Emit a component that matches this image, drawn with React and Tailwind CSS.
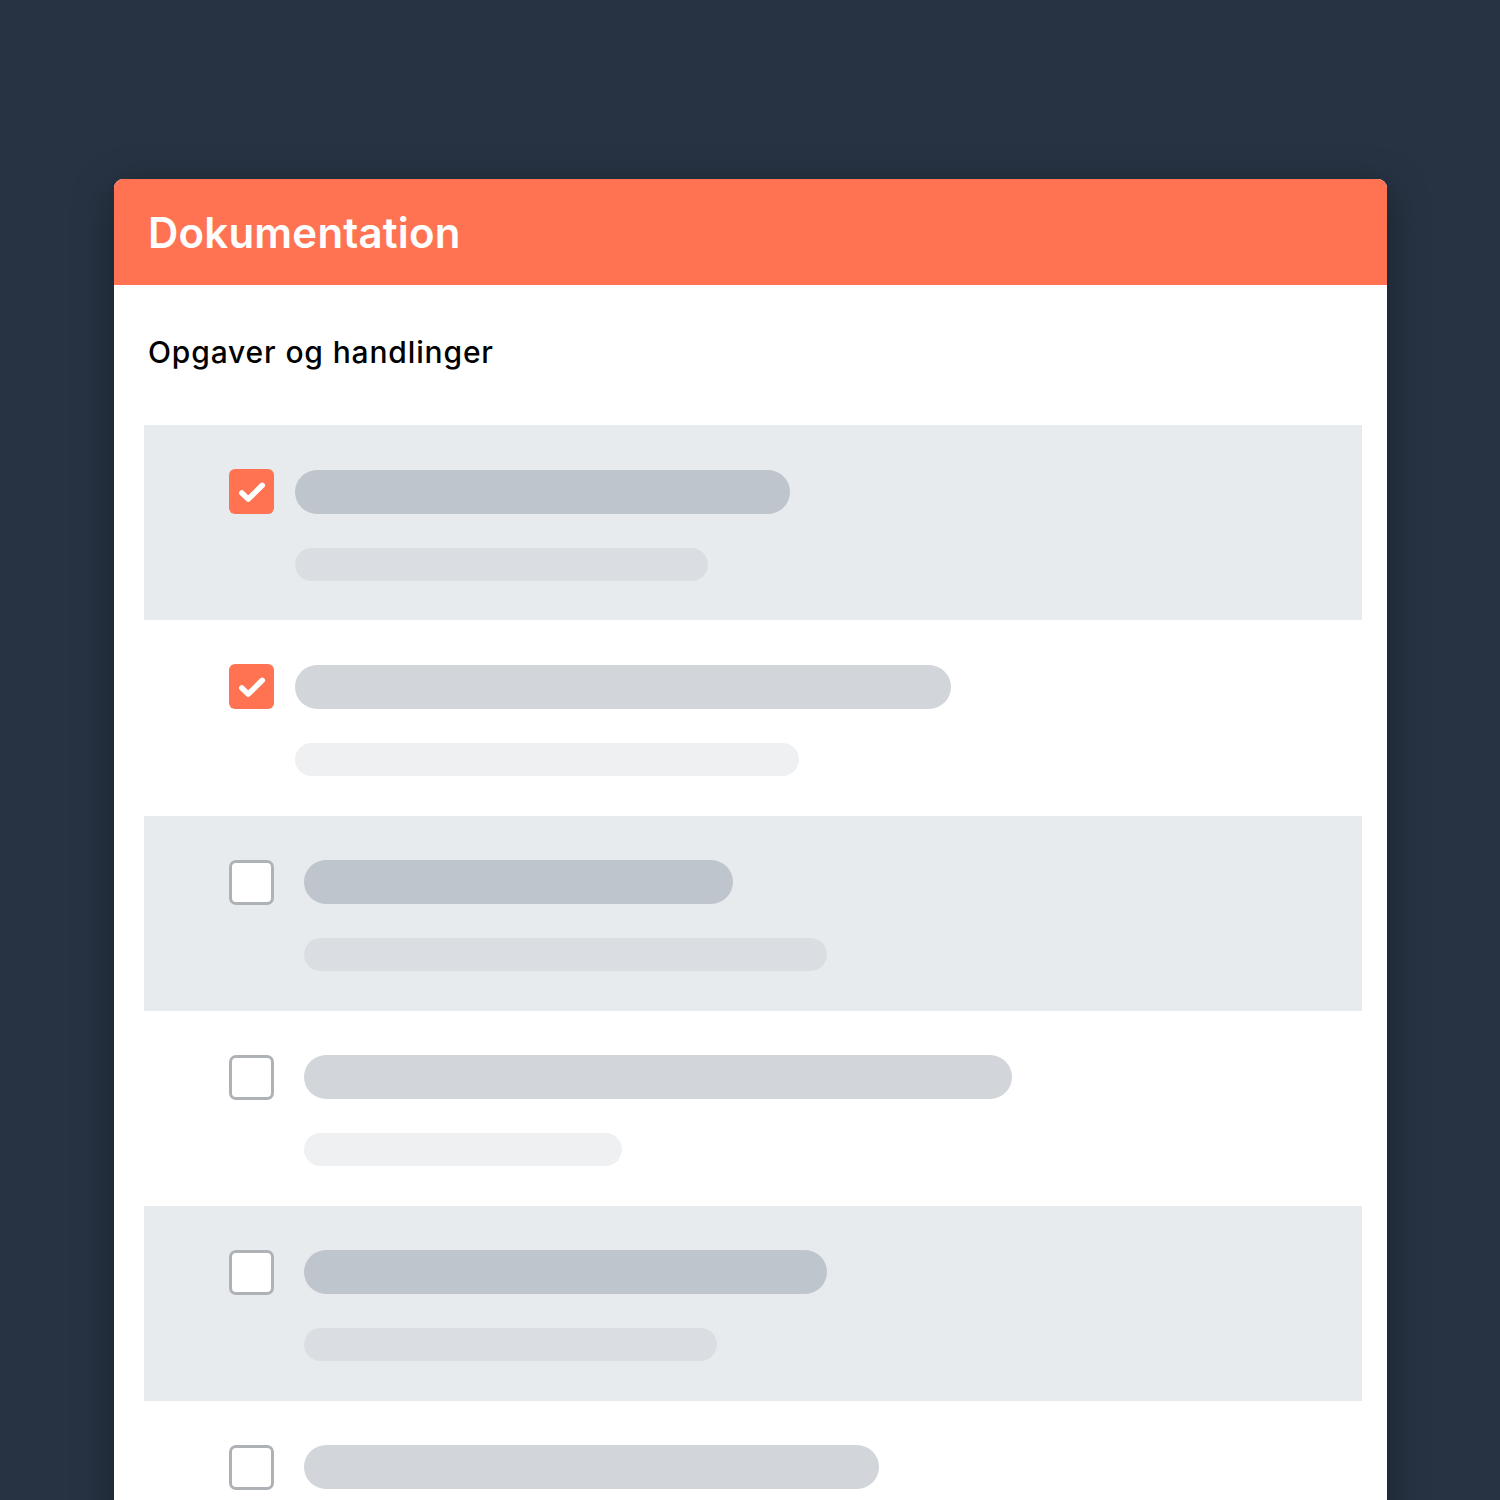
import React from 'react';

// Skeleton rows: widths of the title bar and the note bar, and whether the task is done
const TASKS = [
  { done: true, title: 'w-[495px]', note: 'w-[413px]' },
  { done: true, title: 'w-[656px]', note: 'w-[504px]' },
  { done: false, title: 'w-[429px]', note: 'w-[523px]' },
  { done: false, title: 'w-[708px]', note: 'w-[318px]' },
  { done: false, title: 'w-[523px]', note: 'w-[413px]' },
  { done: false, title: 'w-[575px]', note: 'w-[400px]' },
];

function Checkbox({ checked }) {
  if (checked) {
    return (
      <div className="w-[45px] h-[45px] shrink-0 rounded-[6px] bg-[#ff7352] flex items-center justify-center">
        <svg viewBox="0 0 24 24" className="w-[38px] h-[38px]" fill="none">
          <path d="M5.6 12.6l4 3.9L18.5 7.8" stroke="white" strokeWidth="3.5" strokeLinecap="round" strokeLinejoin="round" />
        </svg>
      </div>
    );
  }
  return <div className="w-[45px] h-[45px] shrink-0 rounded-[7px] border-[3px] border-[#aeb1b5] bg-white" />;
}

function TaskRow({ task, shaded }) {
  const titleColor = shaded ? 'bg-[#bec5cd]' : 'bg-[#d2d6db]';
  const noteColor = shaded ? 'bg-[#dadee3]' : 'bg-[#eef0f2]';
  return (
    <div className={`h-[195.3px] pl-[85px] pt-[44px] flex ${task.done ? 'gap-[20.5px]' : 'gap-[30px]'} ${shaded ? 'bg-[#e8ebee]' : 'bg-white'}`}>
      <Checkbox checked={task.done} />
      <div className={`flex flex-col gap-[34px] ${task.done ? 'pt-[1px]' : ''}`}>
        <div className={`h-[44px] rounded-full ${titleColor} ${task.title}`} />
        <div className={`h-[33px] rounded-full ${noteColor} ${task.note}`} />
      </div>
    </div>
  );
}

export default function App() {
  return (
    <div className="w-[1500px] h-[1500px] overflow-hidden bg-[#273343] pt-[179px] pl-[114px] font-['Inter',sans-serif]">
      <div className="w-[1273px] rounded-t-[9px] overflow-hidden bg-white shadow-[0_10px_40px_rgba(0,0,0,0.35)]">
        <div className="h-[106px] bg-[#ff7352] pl-[34px] pt-[2px] flex items-center">
          <h1 className="text-[42px] font-semibold text-white tracking-[0.2px] leading-none">Dokumentation</h1>
        </div>
        <div className="pl-[30px] pr-[25px] pb-[200px]">
          <h2 className="pl-[4px] pt-[51px] pb-[56px] text-[30px] font-medium text-black leading-[33px] tracking-[0.85px]">
            Opgaver og handlinger
          </h2>
          {TASKS.map((task, i) => (
            <TaskRow key={i} task={task} shaded={i % 2 === 0} />
          ))}
        </div>
      </div>
    </div>
  );
}
